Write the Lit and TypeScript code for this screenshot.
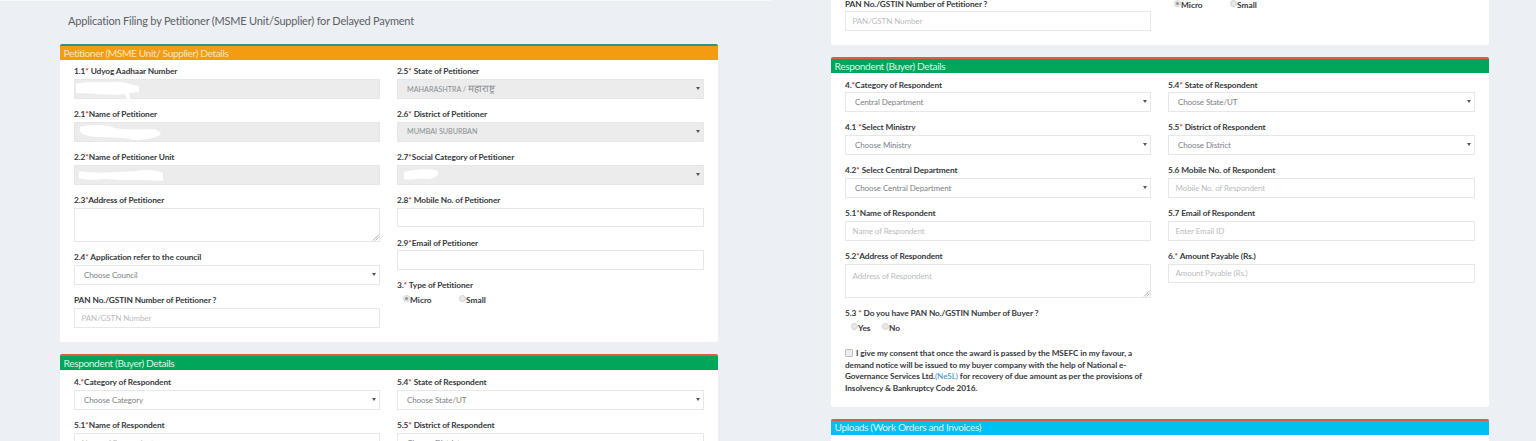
import { LitElement, html, css } from "lit";
import { customElement } from "lit/decorators.js";

type F = { n: string; star?: string; l: string; kind: "input" | "select" | "area"; ph?: string; val?: unknown; dis?: boolean; blob?: string };

const blobs: Record<string, string> = {
  a: "M1 4 C10 1 28 3 38 2 C48 1 56 5 64 6 L64 12 L54 13 L55 19 L52 20 L50 14 C36 16 14 13 1 13 Z",
  b: "M5 4 C16 1 24 2 34 3 C44 7 58 7 80 6 L86 10 C84 15 70 17 58 17 C50 14 40 15 24 14 C16 14 6 12 5 8 Z",
  c: "M4 5 C20 8 40 6 60 5 C70 3 82 4 88 7 L88 15 C70 13 50 15 30 13 C20 14 8 14 4 12 Z",
  d: "M6 6 C14 4 26 2 38 4 C42 6 41 12 30 13 C22 11 14 15 6 13 Z",
};

const label = (f: F) => html`<label class="lab">${f.n}<b class="star">${f.star ?? "*"}</b>${f.l}</label>`;

const control = (f: F) => {
  if (f.kind === "area")
    return html`<div class="ctl area"><span class="ph top">${f.ph ?? ""}</span>
      <svg class="grip" width="7" height="7" viewBox="0 0 7 7"><path d="M1 6.5 6.5 1M3.5 6.5 6.5 3.5" stroke="#9a9a9a" stroke-width=".8" fill="none"/></svg></div>`;
  const blob = f.blob
    ? html`<svg class="blob" width="100" height="20" viewBox="0 0 100 20"><path d="${blobs[f.blob]}" fill="#fff"/></svg>`
    : "";
  return html`<div class="ctl ${f.dis ? "dis" : ""} ${f.kind === "select" ? "sel" : ""}">
    ${blob}
    ${f.val ? html`<span class="val">${f.val}</span>` : f.ph ? html`<span class="ph">${f.ph}</span>` : ""}
    ${f.kind === "select" ? html`<i class="caret"></i>` : ""}
  </div>`;
};

const field = (f: F) => html`<div class="field ${f.kind === "area" ? "fa" : ""}">${label(f)}${control(f)}</div>`;

const radio = (t: string, on = false, cls = "") =>
  html`<span class="radio ${cls}"><i class="dot ${on ? "on" : ""}"></i>${t}</span>`;

const p1L: F[] = [
  { n: "1.1", l: " Udyog Aadhaar Number", kind: "input", dis: true, blob: "a" },
  { n: "2.1", l: "Name of Petitioner", kind: "input", dis: true, blob: "b" },
  { n: "2.2", l: "Name of Petitioner Unit", kind: "input", dis: true, blob: "c" },
  { n: "2.3", l: "Address of Petitioner", kind: "area" },
  { n: "2.4", l: " Application refer to the council", kind: "select", val: "Choose Council" },
  { n: "PAN No./GSTIN Number of Petitioner ?", star: "", l: "", kind: "input", ph: "PAN/GSTN Number" },
];
const p1R: F[] = [
  { n: "2.5", l: " State of Petitioner", kind: "select", dis: true, val: html`<span class="up">MAHARASHTRA /</span> <span class="deva">महाराष्ट्र</span>` },
  { n: "2.6", l: " District of Petitioner", kind: "select", dis: true, val: html`<span class="up">MUMBAI SUBURBAN</span>` },
  { n: "2.7", l: "Social Category of Petitioner", kind: "select", dis: true, blob: "d" },
  { n: "2.8", l: " Mobile No. of Petitioner", kind: "input" },
  { n: "2.9", l: "Email of Petitioner", kind: "input" },
];
const r2L: F[] = [
  { n: "4.", l: "Category of Respondent", kind: "select", val: "Choose Category" },
  { n: "5.1", l: "Name of Respondent", kind: "input", ph: "Name of Respondent" },
];
const r2R: F[] = [
  { n: "5.4", l: " State of Respondent", kind: "select", val: "Choose State/UT" },
  { n: "5.5", l: " District of Respondent", kind: "select", val: "Choose District" },
];
const q0L: F = { n: "PAN No./GSTIN Number of Petitioner ?", star: "", l: "", kind: "input", ph: "PAN/GSTN Number" };
const q1L: F[] = [
  { n: "4.", l: "Category of Respondent", kind: "select", val: "Central Department" },
  { n: "4.1 ", l: "Select Ministry", kind: "select", val: "Choose Ministry" },
  { n: "4.2", l: " Select Central Department", kind: "select", val: "Choose Central Department" },
  { n: "5.1", l: "Name of Respondent", kind: "input", ph: "Name of Respondent" },
  { n: "5.2", l: "Address of Respondent", kind: "area", ph: "Address of Respondent" },
];
const q1R: F[] = [
  { n: "5.4", l: " State of Respondent", kind: "select", val: "Choose State/UT" },
  { n: "5.5", l: " District of Respondent", kind: "select", val: "Choose District" },
  { n: "5.6 Mobile No. of Respondent", star: "", l: "", kind: "input", ph: "Mobile No. of Respondent" },
  { n: "5.7 Email of Respondent", star: "", l: "", kind: "input", ph: "Enter Email ID" },
  { n: "6.", l: " Amount Payable (Rs.)", kind: "input", ph: "Amount Payable (Rs.)" },
];

@customElement("app-root")
export class AppRoot extends LitElement {
  static styles = css`
    :host { display: block; width: 1536px; height: 441px; overflow: hidden; background: #eceff4; font-family: Lato, sans-serif; color: #3f4449; }
    * { box-sizing: border-box; }
    .page { display: grid; grid-template-columns: 771px 765px; height: 441px; }
    .pane { overflow: hidden; height: 441px; }
    .pane.l { padding: 0 53px 0 60px; border-top: 1px solid #f8f9fb; }
    .pane.r { padding: 0 47px 0 60px; }
    h1 { margin: 0; font: 400 11px/14px Lato, sans-serif; letter-spacing: -0.2px; color: #5c6166; padding: 13px 0 0 8px; height: 43px; white-space: nowrap; }
    .head { height: 15.6px; font: 400 10.2px/13.6px Lato, sans-serif; letter-spacing: -0.4px; padding: 0.5px 0 0 3.5px; border-top: 2px solid; border-radius: 2px 2px 0 0; }
    .orange { background: #f39c12; border-top-color: #3c8d8a; color: #fbe6c0; }
    .green { background: #00a65a; border-top-color: #d9603f; color: #d8f5e6; }
    .blue { background: #00c0ef; border-top-color: #dd5a4f; color: #d4f4fc; }
    .body { background: #fff; display: grid; grid-template-columns: 306px 306.5px; column-gap: 17px; padding: 5.8px 14px 0; border-radius: 0 0 2px 2px; }
    .c1 { height: 282.4px; }
    .c2 { height: 334px; }
    .c0 { height: 45px; padding-top: 0; }
    .r0 { margin-top: -2.5px; }
    .c4 { height: 334px; padding-top: 6.7px; }
    .c5 { height: 10px; }
    .gap { height: 12.2px; }
    .field { height: 42.8px; }
    .field.fa { height: 57.6px; }
    .lab { display: block; font: 700 8.3px/13px Lato, sans-serif; letter-spacing: -0.1px; color: #36393d; white-space: pre; height: 13.8px; }
    .star { color: #c0392b; font-weight: 700; }
    .ctl { height: 19.8px; border: 1px solid #e6e7e9; background: #fff; display: flex; align-items: center; position: relative; font: 400 8px/12px Lato, sans-serif; letter-spacing: -0.1px; }
    .ctl.dis { background: #ececec; }
    .ph { color: #b9bcc0; padding-left: 6.5px; }
    .ph.top { position: absolute; top: 6px; left: 0; line-height: 10px; }
    .val { color: #7d8186; padding-left: 9px; white-space: nowrap; }
    .up { font-size: 7.2px; letter-spacing: 0; color: #888c90; }
    .deva { font-size: 10px; color: #888c90; }
    .caret { position: absolute; right: 3px; top: 6.8px; border: 2.2px solid transparent; border-top: 3.4px solid #555; border-bottom: 0; }
    .area { height: 34.6px; }
    .grip { position: absolute; right: 0; bottom: 0; }
    .blob { position: absolute; left: 0; top: 0; }
    .radios { display: flex; height: 12px; padding-left: 6px; margin-top: 1px; font: 700 8.3px/12px Lato, sans-serif; color: #36393d; }
    .radio { display: inline-flex; align-items: center; }
    .radio.w { width: 56px; }
    .radio.y { width: 31px; }
    .dot { width: 7px; height: 7px; border-radius: 50%; background: #e6e8ea; border: 1px solid #cfd2d5; position: relative; top: -1.5px; }
    .dot.on::after { content: ""; position: absolute; left: 1px; top: 1px; width: 3px; height: 3px; border-radius: 50%; background: #8e9296; }
    .consent { margin-top: 14px; font: 700 8.2px/11.6px Lato, sans-serif; letter-spacing: -0.06px; color: #36393d; white-space: nowrap; }
    .box { display: inline-block; width: 8px; height: 8px; border: 1px solid #bcbfc3; background: #eceded; border-radius: 1px; margin-right: 1px; vertical-align: -0.5px; }
    .nesl { color: #3c8dbc; font-weight: 400; }
  `;
  render() {
    return html`<div class="page">
      <section class="pane l">
        <h1>Application Filing by Petitioner (MSME Unit/Supplier) for Delayed Payment</h1>
        <div class="head orange">Petitioner (MSME Unit/ Supplier) Details</div>
        <div class="body c1">
          <div>${p1L.map(field)}</div>
          <div>
            ${p1R.map(field)}
            <label class="lab">3.<b class="star">*</b> Type of Petitioner</label>
            <div class="radios">${radio("Micro", true, "w")}${radio("Small")}</div>
          </div>
        </div>
        <div class="gap"></div>
        <div class="head green">Respondent (Buyer) Details</div>
        <div class="body c4">
          <div>${r2L.map(field)}</div>
          <div>${r2R.map(field)}</div>
        </div>
      </section>
      <section class="pane r">
        <div class="body c0">
          <div class="r0">${field(q0L)}</div>
          <div class="r0">
            <div class="radios">${radio("Micro", true, "w")}${radio("Small")}</div>
          </div>
        </div>
        <div class="gap"></div>
        <div class="head green">Respondent (Buyer) Details</div>
        <div class="body c2">
          <div>
            ${q1L.map(field)}
            <label class="lab">5.3 <b class="star">*</b> Do you have PAN No./GSTIN Number of Buyer ?</label>
            <div class="radios">${radio("Yes", false, "y")}${radio("No")}</div>
            <div class="consent">
              <i class="box"></i> I give my consent that once the award is passed by the MSEFC in my favour, a<br />
              demand notice will be issued to my buyer company with the help of National e-<br />
              Governance Services Ltd.<span class="nesl">(NeSL)</span> for recovery of due amount as per the provisions of<br />
              Insolvency &amp; Bankruptcy Code 2016.
            </div>
          </div>
          <div>${q1R.map(field)}</div>
        </div>
        <div class="gap"></div>
        <div class="head blue">Uploads (Work Orders and Invoices)</div>
        <div class="body c5"></div>
      </section>
    </div>`;
  }
}
